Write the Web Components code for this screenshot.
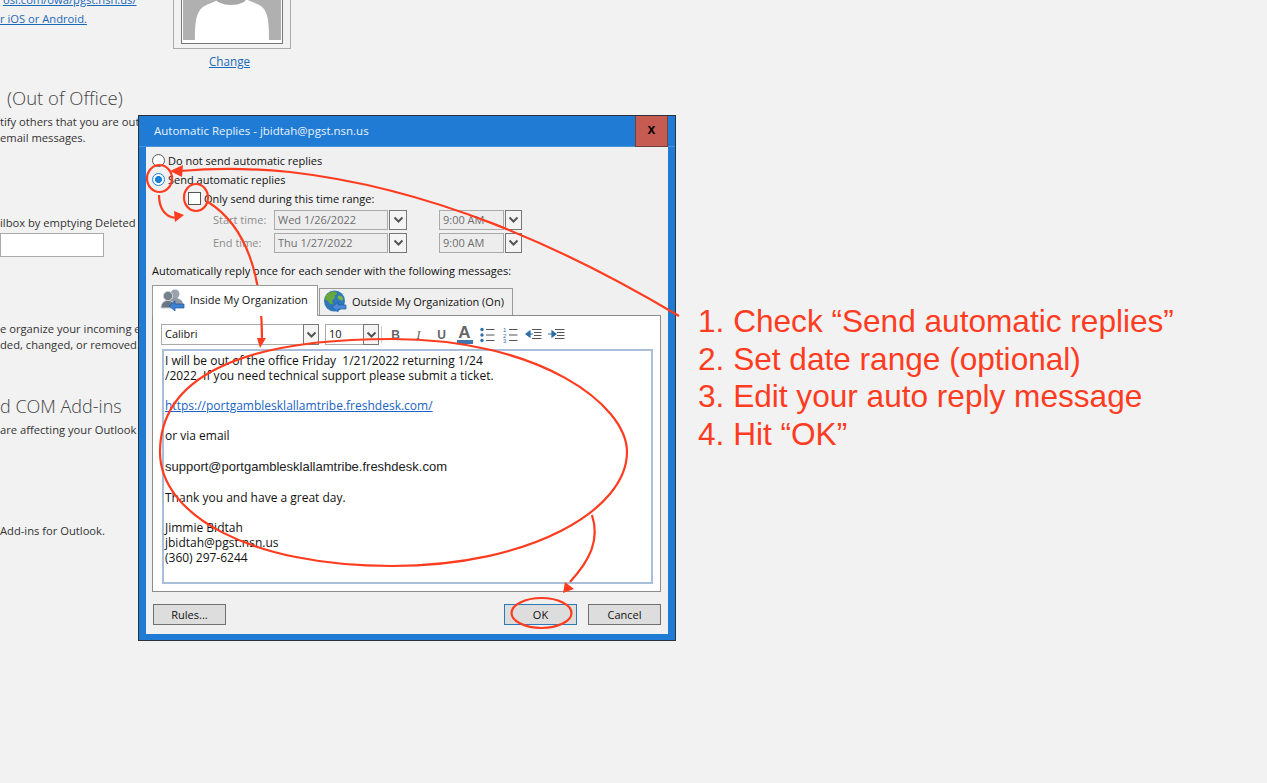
<!DOCTYPE html>
<html>
<head>
<meta charset="utf-8">
<title>Automatic Replies</title>
<style>
  html, body { margin: 0; height: 100%; background: #f2f2f2; overflow: hidden; }
</style>
</head>
<body>
<reply-page></reply-page>
<script>
const CHEVRON = `<svg width="11" height="8" viewBox="0 0 11 8"><path d="M1.5 1.5 L5.5 5.5 L9.5 1.5" fill="none" stroke="#555" stroke-width="2"/></svg>`;

// blue link / grey text page that sits behind the dialog
class SettingsBackdrop extends HTMLElement {
  constructor() {
    super();
    this.attachShadow({ mode: 'open' });
    this.shadowRoot.innerHTML = `
      <style>
        :host {
          display: block;
          width: 698px;
          height: 783px;
          overflow: hidden;
          font: 11.2px/16px "Open Sans", sans-serif;
          color: #333;
          white-space: nowrap;
        }
        a { color: #1a69b8; text-decoration: underline; }
        h2 { margin: 0; font: 300 18.5px/26px "Open Sans", sans-serif; color: #444; }
        .top { display: flex; height: 69px; }
        .links { width: 173px; margin-top: -8px; }
        .links div:first-child { height: 17px; padding-left: 3px; }
        .links div:last-child { margin-top: 2px; }
        .photo { width: 118px; }
        .frame {
          box-sizing: border-box;
          height: 49px;
          padding: 0 7px 4px;
          border: 1px solid #aaa;
          border-top: 0;
        }
        .frame svg { display: block; }
        .change { text-align: center; margin-top: 4px; padding-right: 5px; font-size: 11.700px; }
        .oof { margin-top: 16px; padding-left: 7px; }
        .input { width: 104px; height: 24px; box-sizing: border-box; margin-top: 2px; border: 1px solid #aaa; background: #fff; }
      </style>
      <div class="top">
        <div class="links">
          <div><a>osi.com/owa/pgst.nsn.us/</a></div>
          <div><a>r iOS or Android.</a></div>
        </div>
        <div class="photo">
          <div class="frame">
            <svg width="102" height="44" viewBox="0 0 102 44">
              <rect x=".5" y="-2" width="101" height="45.500" fill="#fff" stroke="#777"/>
              <rect x="2" y="-2" width="98" height="42" fill="#b0b0b0"/>
              <path d="M14 40 C14 20 15 8 28 4 L42 -2 L62 -2 L76 4 C87 8 88 20 88 40 Z" fill="#fff"/>
              <ellipse cx="50" cy="-3" rx="16" ry="8" fill="#a8a8a8"/>
            </svg>
          </div>
          <div class="change"><a>Change</a></div>
        </div>
      </div>
      <div class="oof"><h2>(Out of Office)</h2></div>
      <div style="margin-top:3px">tify others that you are out</div>
      <div>email messages.</div>
      <div style="margin-top:69px">ilbox by emptying Deleted</div>
      <div class="input"></div>
      <div style="margin-top:64px">e organize your incoming e</div>
      <div>ded, changed, or removed.</div>
      <h2 style="margin-top:40px;font-size:18px">d COM Add-ins</h2>
      <div style="margin-top:3px">are affecting your Outlook</div>
      <div style="margin-top:85px">Add-ins for Outlook.</div>
    `;
  }
}

class DialogButton extends HTMLElement {
  constructor() {
    super();
    this.attachShadow({ mode: 'open' });
    this.shadowRoot.innerHTML = `
      <style>
        :host {
          display: flex;
          align-items: center;
          justify-content: center;
          box-sizing: border-box;
          width: 73px;
          height: 21px;
          background: #dddddd;
          border: 1px solid #707070;
        }
        :host([primary]) { border-color: #2a7ab8; }
      </style>
      <slot></slot>
    `;
  }
}

class ComboBox extends HTMLElement {
  constructor() {
    super();
    this.attachShadow({ mode: 'open' });
    this.shadowRoot.innerHTML = `
      <style>
        :host { display: flex; align-items: stretch; height: 20px; --w: 114px; --gap: 1px; --btn: 18px; }
        .value {
          box-sizing: border-box;
          width: var(--w);
          padding-left: 3px;
          line-height: 17px;
          background: var(--field, #ededed);
          border: 1px solid var(--edge, #aaa);
          color: var(--text, #6e6e6e);
          overflow: hidden;
          white-space: nowrap;
        }
        .drop {
          box-sizing: border-box;
          width: var(--btn);
          margin-left: var(--gap);
          border: 1px solid #777;
          background: #f4f4f4;
          display: flex;
          align-items: center;
          justify-content: center;
        }
      </style>
      <div class="value"><slot></slot></div>
      <div class="drop">${CHEVRON}</div>
    `;
  }
}

class EditorToolbar extends HTMLElement {
  constructor() {
    super();
    this.attachShadow({ mode: 'open' });
    this.shadowRoot.innerHTML = `
      <style>
        :host { display: flex; align-items: center; height: 21px; color: #111; }
        combo-box { height: 21px; --field: #fff; --edge: #aaa; --text: #111; --gap: -1px; }
        .font { --w: 143px; --btn: 16px; width: 158px; }
        .size { --w: 39px; --btn: 16px; margin-left: 6px; width: 54px; }
        .sep { width: 1px; height: 17px; background: #ccc; margin: 0 0 0 2px; }
        .fmt { width: 23px; text-align: center; font: bold 12px "Liberation Sans", sans-serif; color: #666; }
        .i { font-style: italic; font-weight: normal; font-family: "Liberation Serif", serif; font-size: 13px; }
        .color { width: 23px; display: flex; flex-direction: column; align-items: center; }
        .color span { font: bold 17px/13px "Liberation Sans", sans-serif; color: #666; }
        .color i { display: block; width: 16px; height: 4px; background: #3f74ad; margin-top: 1px; }
        svg { display: block; }
        .ic { width: 23px; display: flex; justify-content: center; }
        text { font: 6px "Liberation Sans", sans-serif; fill: #2f6ea8; }
      </style>
      <combo-box class="font">Calibri</combo-box>
      <combo-box class="size">10</combo-box>
      <div class="sep"></div>
      <div class="fmt" style="margin-left:2px">B</div>
      <div class="fmt i">I</div>
      <div class="fmt">U</div>
      <div class="color"><span>A</span><i></i></div>
      <div class="ic"><svg width="15" height="16" viewBox="0 0 15 16">
        <g fill="#2f6ea8"><circle cx="2" cy="2.500" r="1.700"/><circle cx="2" cy="8" r="1.700"/><circle cx="2" cy="13.500" r="1.700"/></g>
        <path d="M6 2.500h8.500M6 8h8.500M6 13.500h8.500" stroke="#555" stroke-width="1"/></svg></div>
      <div class="ic"><svg width="15" height="16" viewBox="0 0 15 16">
        <text x="0" y="5">1</text><text x="0" y="10.500">2</text><text x="0" y="16">3</text>
        <path d="M6 2.500h8.500M6 8h8.500M6 13.500h8.500" stroke="#555" stroke-width="1"/></svg></div>
      <div class="ic"><svg width="17" height="13" viewBox="0 0 17 13">
        <path d="M7 1.500h9.500M9 4.500h7.500M9 7.500h7.500M7 10.500h9.500" stroke="#555"/>
        <path d="M8 6H3.500M5 3L1 6l4 3z" fill="#2f6ea8" stroke="#2f6ea8" stroke-width="1.200"/></svg></div>
      <div class="ic"><svg width="17" height="13" viewBox="0 0 17 13">
        <path d="M7 1.500h9.500M9 4.500h7.500M9 7.500h7.500M7 10.500h9.500" stroke="#555"/>
        <path d="M0 6h5M4 3l4 3-4 3z" fill="#2f6ea8" stroke="#2f6ea8" stroke-width="1.200"/></svg></div>
    `;
  }
}

class ReplyEditor extends HTMLElement {
  constructor() {
    super();
    this.attachShadow({ mode: 'open' });
    this.shadowRoot.innerHTML = `
      <style>
        :host {
          display: block;
          box-sizing: border-box;
          width: 491px;
          height: 235px;
          margin: 4px 0 0 1px;
          padding: 2px 1px 0 1px;
          border: 2px solid #a9bfd9;
          background: #fff;
          color: #111;
          font-size: 12px;
          line-height: 15px;
        }
        div { white-space: pre; }
        a { color: #1a63c4; text-decoration: underline; }
        .mail { font: 13px/17px "Liberation Sans", sans-serif; color: #222; }
        .b { height: 15px; }
      </style>
      <div>I will be out of the office Friday  1/21/2022 returning 1/24</div>
      <div>/2022. If you need technical support please submit a ticket.</div>
      <div class="b"></div>
      <div><a>https://portgamblesklallamtribe.freshdesk.com/</a></div>
      <div class="b"></div>
      <div>or via email</div>
      <div class="b"></div>
      <div class="mail">support@portgamblesklallamtribe.freshdesk.com</div>
      <div class="b"></div>
      <div>Thank you and have a great day.</div>
      <div class="b"></div>
      <div>Jimmie Bidtah</div>
      <div>jbidtah@pgst.nsn.us</div>
      <div>(360) 297-6244</div>
    `;
  }
}

class ReplyTabs extends HTMLElement {
  constructor() {
    super();
    this.attachShadow({ mode: 'open' });
    this.shadowRoot.innerHTML = `
      <style>
        :host { display: block; color: #111; }
        .strip { display: flex; align-items: flex-end; height: 30px; position: relative; z-index: 1; }
        .tab { box-sizing: border-box; display: flex; align-items: center; white-space: nowrap; border: 1px solid #999; }
        .on { width: 166px; height: 31px; margin-bottom: -1px; padding: 0 0 3px 7px; gap: 5px; background: #fff; border-bottom: 0; }
        .off { width: 194px; height: 27px; margin-left: 1px; padding: 0 0 1px 3px; gap: 5px; background: #efefef; border-bottom: 0; }
        .panel {
          box-sizing: border-box;
          width: 509px;
          height: 277px;
          padding: 8px 8px 0 8px;
          background: #fff;
          border: 1px solid #8c8c8c;
        }
        svg { display: block; flex: none; }
      </style>
      <div class="strip">
        <div class="tab on">
          <svg width="25" height="24" viewBox="0 0 25 24">
            <circle cx="15" cy="6" r="4.500" fill="#9aa3ad"/>
            <path d="M8 17c0-5 3-7 7-7s8 2 8 7z" fill="#8d98a4"/>
            <circle cx="8" cy="8" r="4.600" fill="#77818c" stroke="#c9d0d8"/>
            <path d="M1 20c0-5 3-7.500 7-7.500s7 2.500 7 7.500z" fill="#6a7683" stroke="#c9d0d8"/>
            <path d="M24 18h-9v-3l-6 5 6 5v-3h9z" transform="translate(0 -2)" fill="#3d7fd0" stroke="#23599d" stroke-width=".7"/>
          </svg>
          <span>Inside My Organization</span>
        </div>
        <div class="tab off">
          <svg width="24" height="24" viewBox="0 0 24 24">
            <circle cx="11.500" cy="11" r="10.500" fill="#2f78b8"/>
            <path d="M4 4c3-2 6-3 9-2 2 1 1 3-1 3-1 1 1 3-1 4-2 0-2 3-1 5-2 1-4-1-5-3-1-1-3-1-3-3 0-1 1-3 2-4z" fill="#66a83c"/>
            <path d="M15 6c2-1 4 0 5 2 1 2-1 3-3 2s-3-3-2-4z" fill="#7db54a"/>
            <path d="M23 17h-8v-3l-6 5 6 5v-3h8z" transform="translate(0 -2)" fill="#4b8ad8" stroke="#23599d" stroke-width=".7"/>
          </svg>
          <span>Outside My Organization (On)</span>
        </div>
      </div>
      <div class="panel">
        <editor-toolbar></editor-toolbar>
        <reply-editor></reply-editor>
      </div>
    `;
  }
}

class AutoReplyDialog extends HTMLElement {
  constructor() {
    super();
    this.attachShadow({ mode: 'open' });
    this.shadowRoot.innerHTML = `
      <style>
        :host {
          position: absolute;
          left: 138px;
          top: 115px;
          box-sizing: border-box;
          width: 538px;
          height: 526px;
          border: 1px solid #2d3238;
          background: #207bd4;
          font: 11px/15px "Open Sans", sans-serif;
          color: #111;
          display: flex;
          flex-direction: column;
        }
        .title { display: flex; justify-content: space-between; height: 30px; color: #e8f2fb; font-size: 11.500px; line-height: 30px; padding-left: 15px; padding-right: 7px; border-bottom: 1px solid #4c92da; }
        .close {
          box-sizing: border-box;
          width: 33px;
          height: 31px;
          margin-bottom: -1px;
          background: #c65b52;
          border: 1px solid #70403c;
          border-top: 0;
          color: #000;
          text-align: center;
          font: bold 14px/26px "Liberation Sans", sans-serif;
        }
        .body {
          box-sizing: border-box;
          width: 522px;
          height: 487px;
          margin-left: 7px;
          padding: 4px 7px 0 6px;
          background: #f0f0f0;
        }
        .row { display: flex; align-items: center; height: 19px; white-space: nowrap; }
        .radio {
          box-sizing: border-box;
          width: 13px;
          height: 13px;
          border: 1px solid #555;
          border-radius: 50%;
          background: #fff;
          margin-right: 3px;
        }
        .radio.on { border-color: #1883d7; background: radial-gradient(circle, #1883d7 0 3.200px, #fff 3.800px); }
        .check { box-sizing: border-box; width: 13px; height: 13px; border: 1px solid #555; background: #fff; margin: 0 3px 0 36px; }
        .time { display: flex; align-items: center; height: 20px; margin-top: 3px; color: #8c8c8c; }
        .row + .time { margin-top: 2px; }
        .time label { width: 61px; margin-left: 61px; padding-bottom: 2px; }
        .time combo-box + combo-box { margin-left: 32px; --w: 65px; --btn: 17px; }
        .lead { margin-top: 8px; height: 19px; line-height: 19px; white-space: nowrap; margin-bottom: 5px; }
        .foot { display: flex; margin: 12px 0 0 1px; }
        .foot :nth-child(2) { margin-left: auto; }
        .foot :nth-child(3) { margin-left: 11px; }
      </style>
      <div class="title"><span>Automatic Replies - jbidtah@pgst.nsn.us</span><div class="close">x</div></div>
      <div class="body">
        <div class="row"><div class="radio"></div>Do not send automatic replies</div>
        <div class="row"><div class="radio on"></div>Send automatic replies</div>
        <div class="row"><div class="check"></div>Only send during this time range:</div>
        <div class="time"><label>Start time:</label><combo-box>Wed 1/26/2022</combo-box><combo-box>9:00 AM</combo-box></div>
        <div class="time"><label>End time:</label><combo-box>Thu 1/27/2022</combo-box><combo-box>9:00 AM</combo-box></div>
        <div class="lead">Automatically reply once for each sender with the following messages:</div>
        <reply-tabs></reply-tabs>
        <div class="foot">
          <dialog-button>Rules...</dialog-button>
          <dialog-button primary>OK</dialog-button>
          <dialog-button>Cancel</dialog-button>
        </div>
      </div>
    `;
  }
}

class StepCallout extends HTMLElement {
  constructor() {
    super();
    this.attachShadow({ mode: 'open' });
    this.shadowRoot.innerHTML = `
      <style>
        :host {
          display: block;
          margin-top: 303px;
          font: 31.600px/37.700px "Liberation Sans", sans-serif;
          color: #ff3c1f;
          white-space: nowrap;
        }
      </style>
      <div>1. Check “Send automatic replies”</div>
      <div>2. Set date range (optional)</div>
      <div>3. Edit your auto reply message</div>
      <div>4. Hit “OK”</div>
    `;
  }
}

// hand drawn red marks over the screenshot
class RedMarks extends HTMLElement {
  constructor() {
    super();
    this.attachShadow({ mode: 'open' });
    this.shadowRoot.innerHTML = `
      <style>
        :host { position: absolute; left: 0; top: 0; pointer-events: none; }
        svg { display: block; }
        .s { fill: none; stroke: #ff3c1f; stroke-width: 2.200; }
        .h { fill: #ff3c1f; }
      </style>
      <svg width="1267" height="783" viewBox="0 0 1267 783">
        <path class="s" d="M627 452 C627 405 540 339 392 339 C235 339 160 380 160 452 C160 515 250 566 392 566 C530 566 627 510 627 452 Z"/>
        <ellipse class="s" cx="159.500" cy="178.500" rx="12.500" ry="13.500"/>
        <ellipse class="s" cx="196" cy="197.500" rx="12" ry="13.500"/>
        <ellipse class="s" cx="541.500" cy="613" rx="30" ry="15"/>
        <path class="s" d="M679 316 C560 245 430 188 290 172 C250 168 215 168 180 171"/>
        <path class="h" d="M170 171 L183 165 L182 177 Z"/>
        <path class="s" d="M159 195 C159 207 164 217 176 218"/>
        <path class="h" d="M184 215 L174 211 L175 222 Z"/>
        <path class="s" d="M208 202 C240 222 262 262 262 340"/>
        <path class="h" d="M260 348 L257 338 L266 338 Z"/>
        <path class="s" d="M592 515 C600 540 590 560 570 582"/>
        <path class="h" d="M563 593 L565 582 L574 589 Z"/>
      </svg>
    `;
  }
}

class ReplyPage extends HTMLElement {
  constructor() {
    super();
    this.attachShadow({ mode: 'open' });
    this.shadowRoot.innerHTML = `
      <style>
        :host { display: flex; position: relative; width: 1267px; height: 783px; overflow: hidden; background: #f2f2f2; }
      </style>
      <settings-backdrop></settings-backdrop>
      <step-callout></step-callout>
      <auto-reply-dialog></auto-reply-dialog>
      <red-marks></red-marks>
    `;
  }
}

customElements.define('settings-backdrop', SettingsBackdrop);
customElements.define('dialog-button', DialogButton);
customElements.define('combo-box', ComboBox);
customElements.define('editor-toolbar', EditorToolbar);
customElements.define('reply-editor', ReplyEditor);
customElements.define('reply-tabs', ReplyTabs);
customElements.define('auto-reply-dialog', AutoReplyDialog);
customElements.define('step-callout', StepCallout);
customElements.define('red-marks', RedMarks);
customElements.define('reply-page', ReplyPage);
</script>
</body>
</html>
